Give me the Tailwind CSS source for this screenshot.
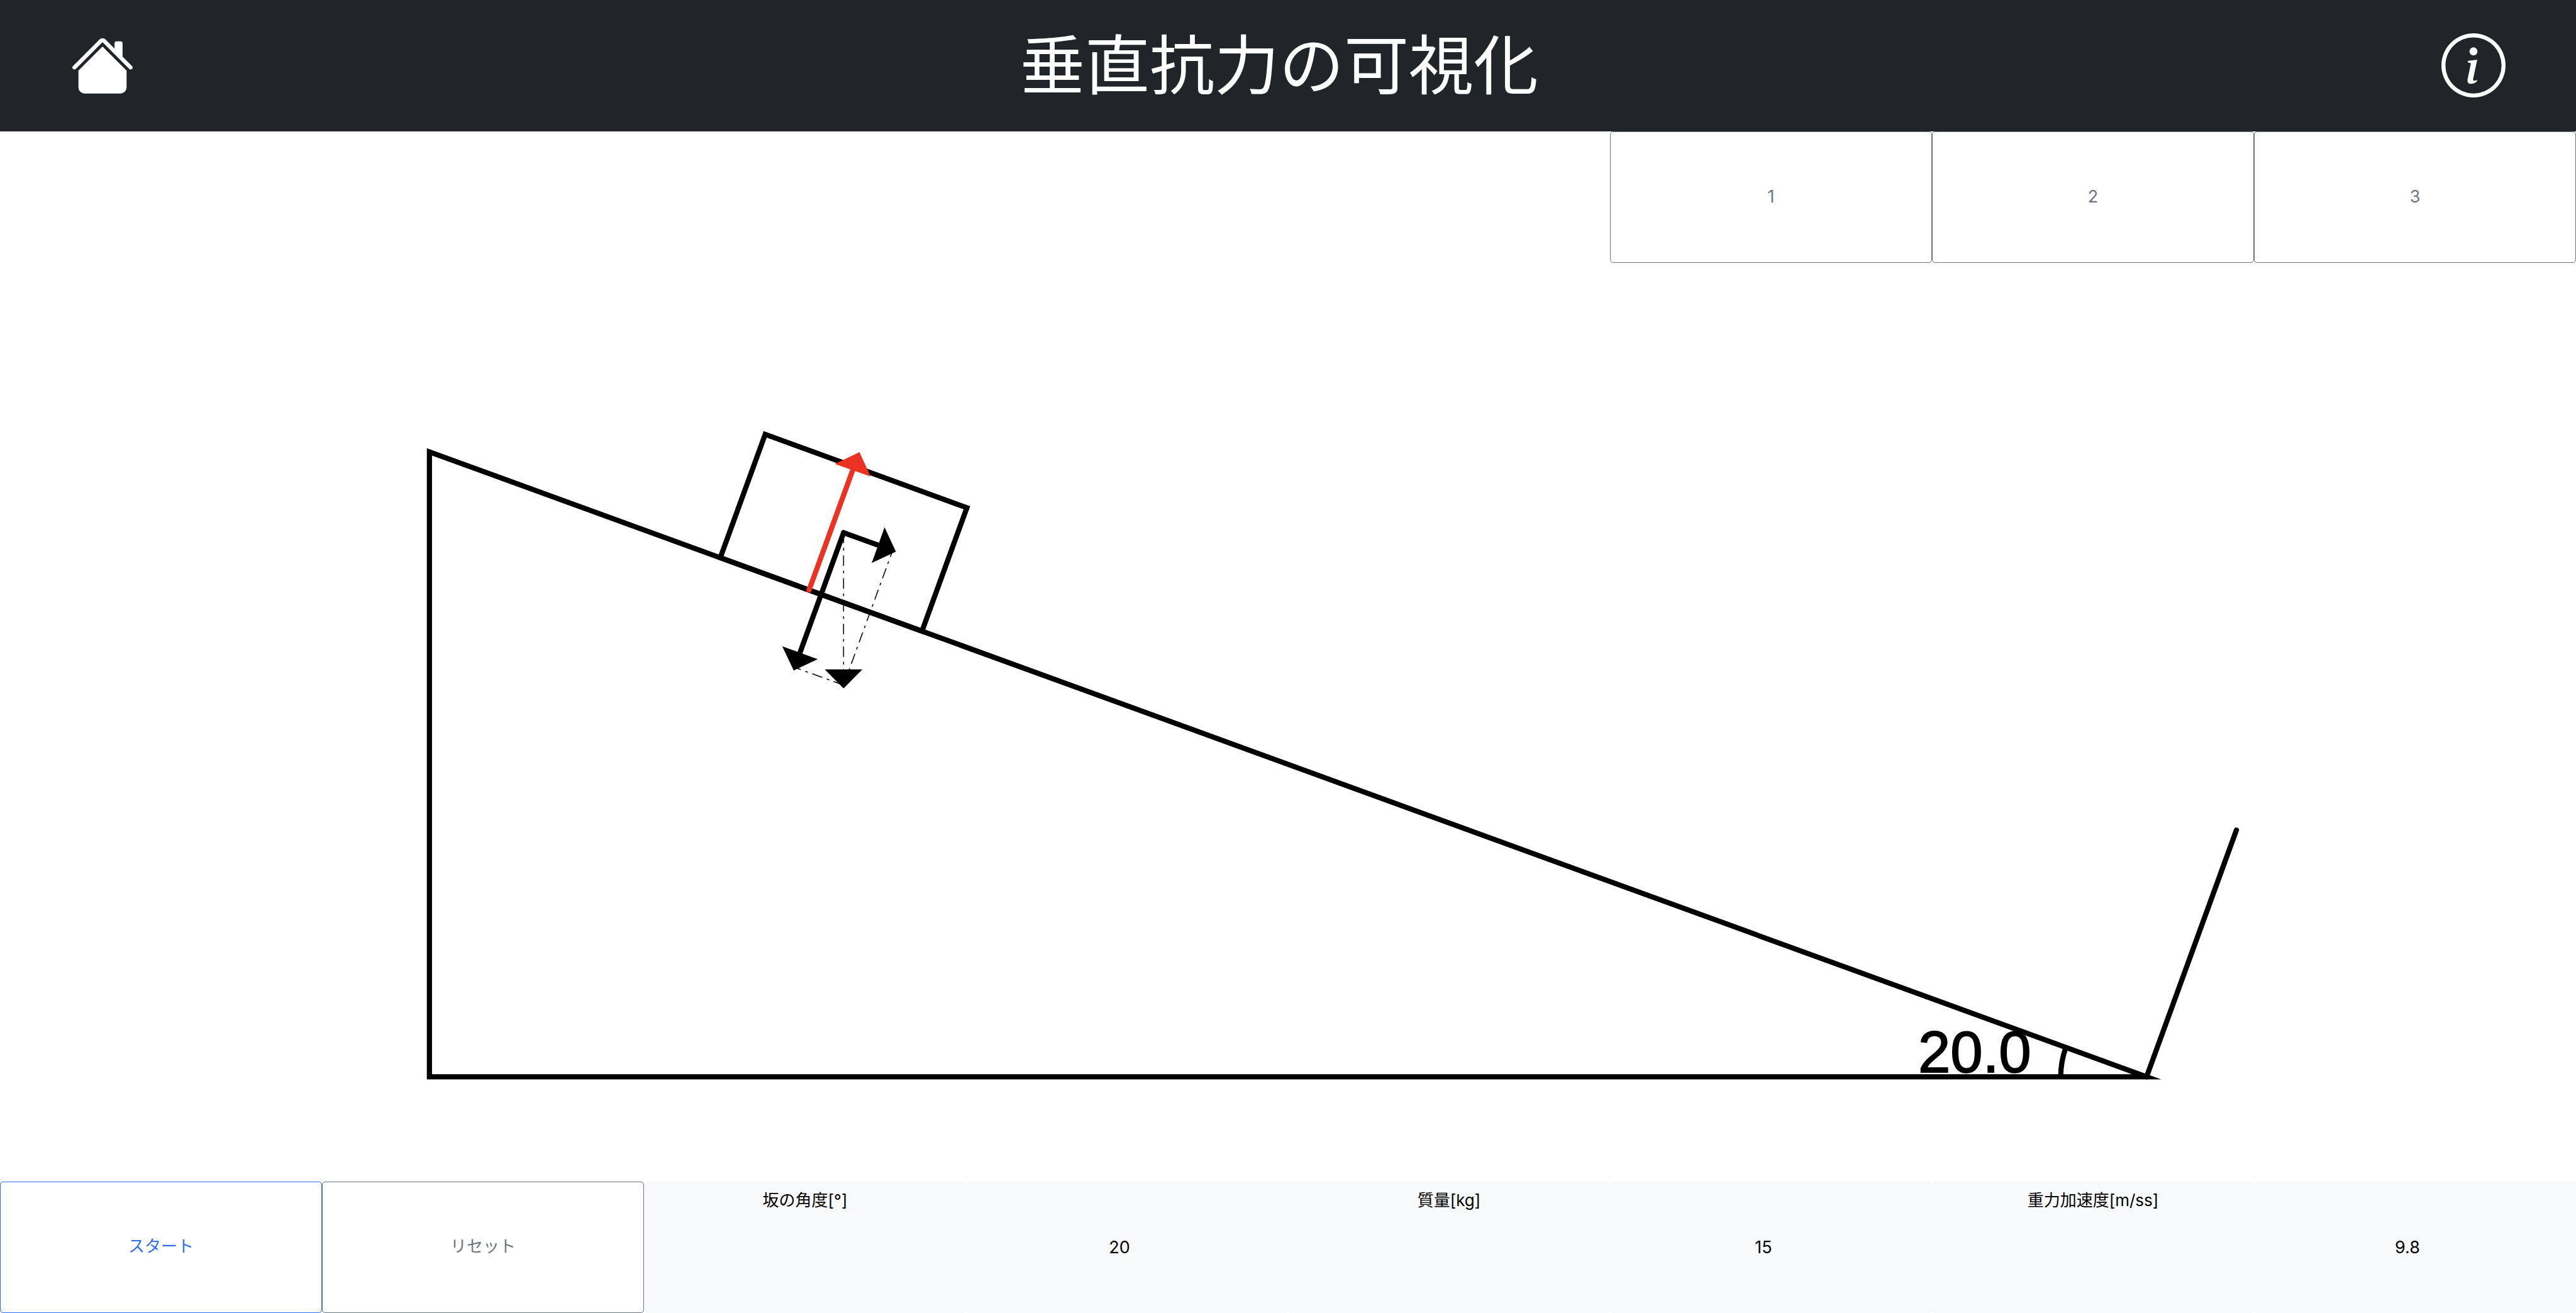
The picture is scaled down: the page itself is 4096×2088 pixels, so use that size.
<!DOCTYPE html>
<html lang="ja">
<head>
<meta charset="utf-8">
<meta name="viewport" content="width=device-width, initial-scale=1">
<title>垂直抗力の可視化</title>
<script src="https://cdn.jsdelivr.net/npm/@tailwindcss/browser@4"></script>
</head>
<body class="flex h-screen flex-col bg-white font-['Inter','Noto_Sans_CJK_JP',sans-serif] text-[26px] leading-10 text-black">

  <header class="flex h-[10vh] shrink-0 items-center justify-between bg-[#212529] px-28 text-white">
    <a href="#" aria-label="ホーム">
      <svg class="size-[102px]" viewBox="0 0 16 16" fill="currentColor" aria-hidden="true">
        <path d="M8.707 1.5a1 1 0 0 0-1.414 0L.646 8.146a.5.5 0 0 0 .708.708L8 2.207l6.646 6.647a.5.5 0 0 0 .708-.708L13 5.793V2.5a.5.5 0 0 0-.5-.5h-1a.5.5 0 0 0-.5.5v1.293z"/>
        <path d="m8 3.293 6 6V13.5a1.5 1.5 0 0 1-1.5 1.5h-9A1.5 1.5 0 0 1 2 13.5V9.293z"/>
      </svg>
    </a>
    <h1 class="pr-7 text-[103px] leading-none">垂直抗力の可視化</h1>
    <button type="button" aria-label="情報">
      <svg class="size-[102px]" viewBox="0 0 16 16" fill="currentColor" aria-hidden="true">
        <path d="M8 15A7 7 0 1 1 8 1a7 7 0 0 1 0 14m0 1A8 8 0 1 0 8 0a8 8 0 0 0 0 16"/>
        <path d="m8.930 6.588-2.290.287-.082.380.450.083c.294.070.352.176.288.469l-.738 3.468c-.194.897.105 1.319.808 1.319.545 0 1.178-.252 1.465-.598l.088-.416c-.2.176-.492.246-.686.246-.275 0-.375-.193-.304-.533zM9 4.500a1 1 0 1 1-2 0 1 1 0 0 1 2 0"/>
      </svg>
    </button>
  </header>

  <main class="relative min-h-0 flex-1">
    <svg class="block size-full" viewBox="0 228.4 4480 1827.2" fill="none" stroke="#000" stroke-width="9" stroke-miterlimit="10" role="img" aria-label="斜面上の物体にはたらく力">
      <!-- slope, end wall and angle -->
      <path d="M746.67 785.8V1872.900H3733.330Z"/>
      <path d="M3733.330 1872.900L3889.600 1443.700" stroke-linecap="round"/>
      <path d="M3584 1872.900A149.330 149.330 0 0 1 3593 1821.800"/>
      <text x="3336" y="1865" fill="#000" stroke-width="2" class="font-['Liberation_Sans',sans-serif] text-[101px]">20.0</text>
      <!-- block -->
      <path d="M1252.600 969.900L1330.700 755.300L1681.500 883L1603.400 1097.600Z"/>
      <!-- gravity and its components -->
      <g stroke-width="1.700" stroke-dasharray="18.300 8.200 4.700 8.400">
        <path d="M1467 926.400V1191.600"/>
        <path d="M1467 1191.600L1552.300 957.400"/>
        <path d="M1467 1191.600L1381.700 1160.600"/>
      </g>
      <g stroke-linecap="round">
        <path d="M1467 926.400L1527 948"/>
        <path d="M1467 926.400L1391.200 1135"/>
        <path d="M1407 1026.300L1483 817.300" stroke="#eb3323"/>
      </g>
      <g fill="#000" stroke="none">
        <path d="M1558 959.300L1538.300 917L1516 979Z"/>
        <path d="M1380.300 1166L1360.300 1124L1422 1146.300Z"/>
        <path d="M1467 1197.300L1434.300 1164.300H1499.700Z"/>
        <path d="M1494.700 786.300L1451.700 806.700L1514 828.700Z" fill="#eb3323"/>
      </g>
    </svg>

    <div class="absolute top-0 right-0 grid h-[10vh] w-3/8 grid-cols-3 text-[27px] text-[#6c757d]">
      <button type="button" class="rounded-[5px] border border-[#6c757d] bg-white">1</button>
      <button type="button" class="rounded-[5px] border border-[#6c757d] bg-white">2</button>
      <button type="button" class="rounded-[5px] border border-[#6c757d] bg-white">3</button>
    </div>
  </main>

  <footer class="grid h-[10vh] shrink-0 grid-cols-8">
    <button type="button" class="rounded-[5px] border border-[#316cf4] pb-1 text-[#316cf4]">スタート</button>
    <button type="button" class="rounded-[5px] border border-[#6c757d] pb-1 text-[#6c757d]">リセット</button>
    <label for="angle" class="rounded-[5px] bg-[#f8f9fa] pt-[10px] text-center">坂の角度[°]</label>
    <input id="angle" type="text" inputmode="decimal" value="20" class="min-w-0 rounded-[5px] bg-[#f8f9fa] pr-6 text-center text-[27px]">
    <label for="mass" class="rounded-[5px] bg-[#f8f9fa] pt-[10px] text-center">質量[kg]</label>
    <input id="mass" type="text" inputmode="decimal" value="15" class="min-w-0 rounded-[5px] bg-[#f8f9fa] pr-6 text-center text-[27px]">
    <label for="gravity" class="rounded-[5px] bg-[#f8f9fa] pt-[10px] text-center">重力加速度[m/ss]</label>
    <input id="gravity" type="text" inputmode="decimal" value="9.8" class="min-w-0 rounded-[5px] bg-[#f8f9fa] pr-6 text-center text-[27px]">
  </footer>

</body>
</html>
